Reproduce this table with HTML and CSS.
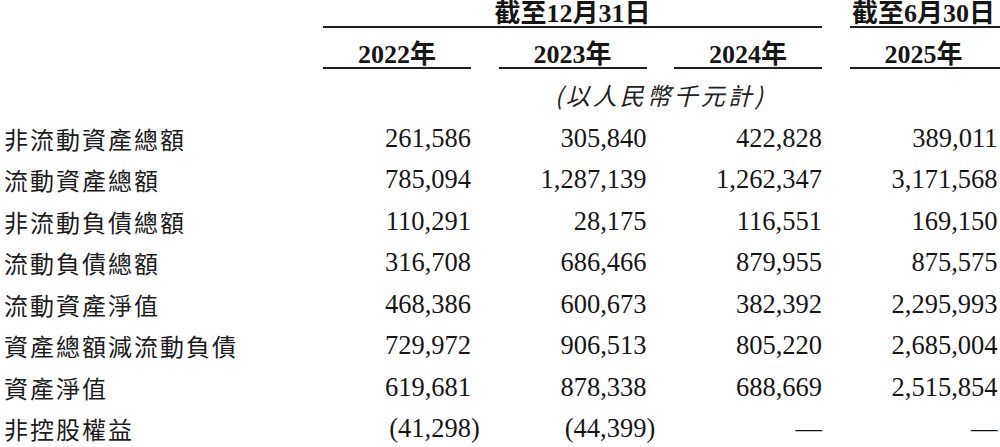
FILE: index.html
```html
<!DOCTYPE html>
<html lang="zh-Hant">
<head>
<meta charset="utf-8">
<title>財務狀況摘要</title>
<link rel="stylesheet" href="styles.css">
</head>
<body>
<div class="fin">
  <div class="blank"></div>
  <div class="period span3">截至12月31日</div>
  <div class="period last">截至6月30日</div>

  <div class="blank"></div>
  <div class="year">2022年</div>
  <div class="year">2023年</div>
  <div class="year">2024年</div>
  <div class="year last">2025年</div>

  <div class="blank"></div>
  <div class="blank"></div>
  <div class="unit">(以人民幣千元計)</div>
  <div class="blank"></div>

  <div class="label">非流動資產總額</div>
  <div class="num">261,586</div>
  <div class="num">305,840</div>
  <div class="num">422,828</div>
  <div class="num">389,011</div>

  <div class="label">流動資產總額</div>
  <div class="num">785,094</div>
  <div class="num">1,287,139</div>
  <div class="num">1,262,347</div>
  <div class="num">3,171,568</div>

  <div class="label">非流動負債總額</div>
  <div class="num">110,291</div>
  <div class="num">28,175</div>
  <div class="num">116,551</div>
  <div class="num">169,150</div>

  <div class="label">流動負債總額</div>
  <div class="num">316,708</div>
  <div class="num">686,466</div>
  <div class="num">879,955</div>
  <div class="num">875,575</div>

  <div class="label">流動資產淨值</div>
  <div class="num">468,386</div>
  <div class="num">600,673</div>
  <div class="num">382,392</div>
  <div class="num">2,295,993</div>

  <div class="label">資產總額減流動負債</div>
  <div class="num">729,972</div>
  <div class="num">906,513</div>
  <div class="num">805,220</div>
  <div class="num">2,685,004</div>

  <div class="label">資產淨值</div>
  <div class="num">619,681</div>
  <div class="num">878,338</div>
  <div class="num">688,669</div>
  <div class="num">2,515,854</div>

  <div class="label">非控股權益</div>
  <div class="num">(41,298<span class="rp">)</span></div>
  <div class="num">(44,399<span class="rp">)</span></div>
  <div class="num">—</div>
  <div class="num">—</div>
</div>
</body>
</html>
```

FILE: styles.css
```css
html, body {
  margin: 0;
  padding: 0;
  background: #ffffff;
}

body {
  color: #161616;
  font-family: "Liberation Serif", "Noto Sans CJK TC", serif;
  overflow: hidden;
}

.fin {
  display: grid;
  grid-template-columns: 295.5px repeat(4, 148px);
  grid-template-rows: 28px 41px 48.5px repeat(8, 41.5px);
  column-gap: 27.5px;
}

.blank {
  min-width: 0;
}

.period {
  box-sizing: border-box;
  font-weight: 700;
  font-size: 26px;
  line-height: 26px;
  padding-top: 1px;
  text-align: center;
  border-bottom: 2px solid #1e1e1e;
  white-space: nowrap;
}

.span3 {
  grid-column: 2 / 5;
}

.year {
  box-sizing: border-box;
  font-weight: 700;
  font-size: 26px;
  line-height: 26px;
  padding-top: 14px;
  text-align: center;
  border-bottom: 2px solid #1e1e1e;
  white-space: nowrap;
}

.last {
  margin-right: -3px;
  padding-right: 3px;
}

.unit {
  grid-column: 3 / 5;
  font-family: "Noto Sans CJK TC", sans-serif;
  font-style: italic;
  font-size: 24px;
  line-height: 48.5px;
  padding-top: 2px;
  letter-spacing: 3px;
  text-align: center;
  white-space: nowrap;
  color: #222;
}

.label {
  font-family: "Noto Sans CJK TC", sans-serif;
  font-size: 24px;
  line-height: 41.5px;
  letter-spacing: 2px;
  padding-left: 4px;
  white-space: nowrap;
  color: #1c1c1c;
}

.num {
  font-size: 26.5px;
  line-height: 41.5px;
  text-align: right;
  white-space: nowrap;
}

.rp {
  margin-right: -0.333em;
}
```
